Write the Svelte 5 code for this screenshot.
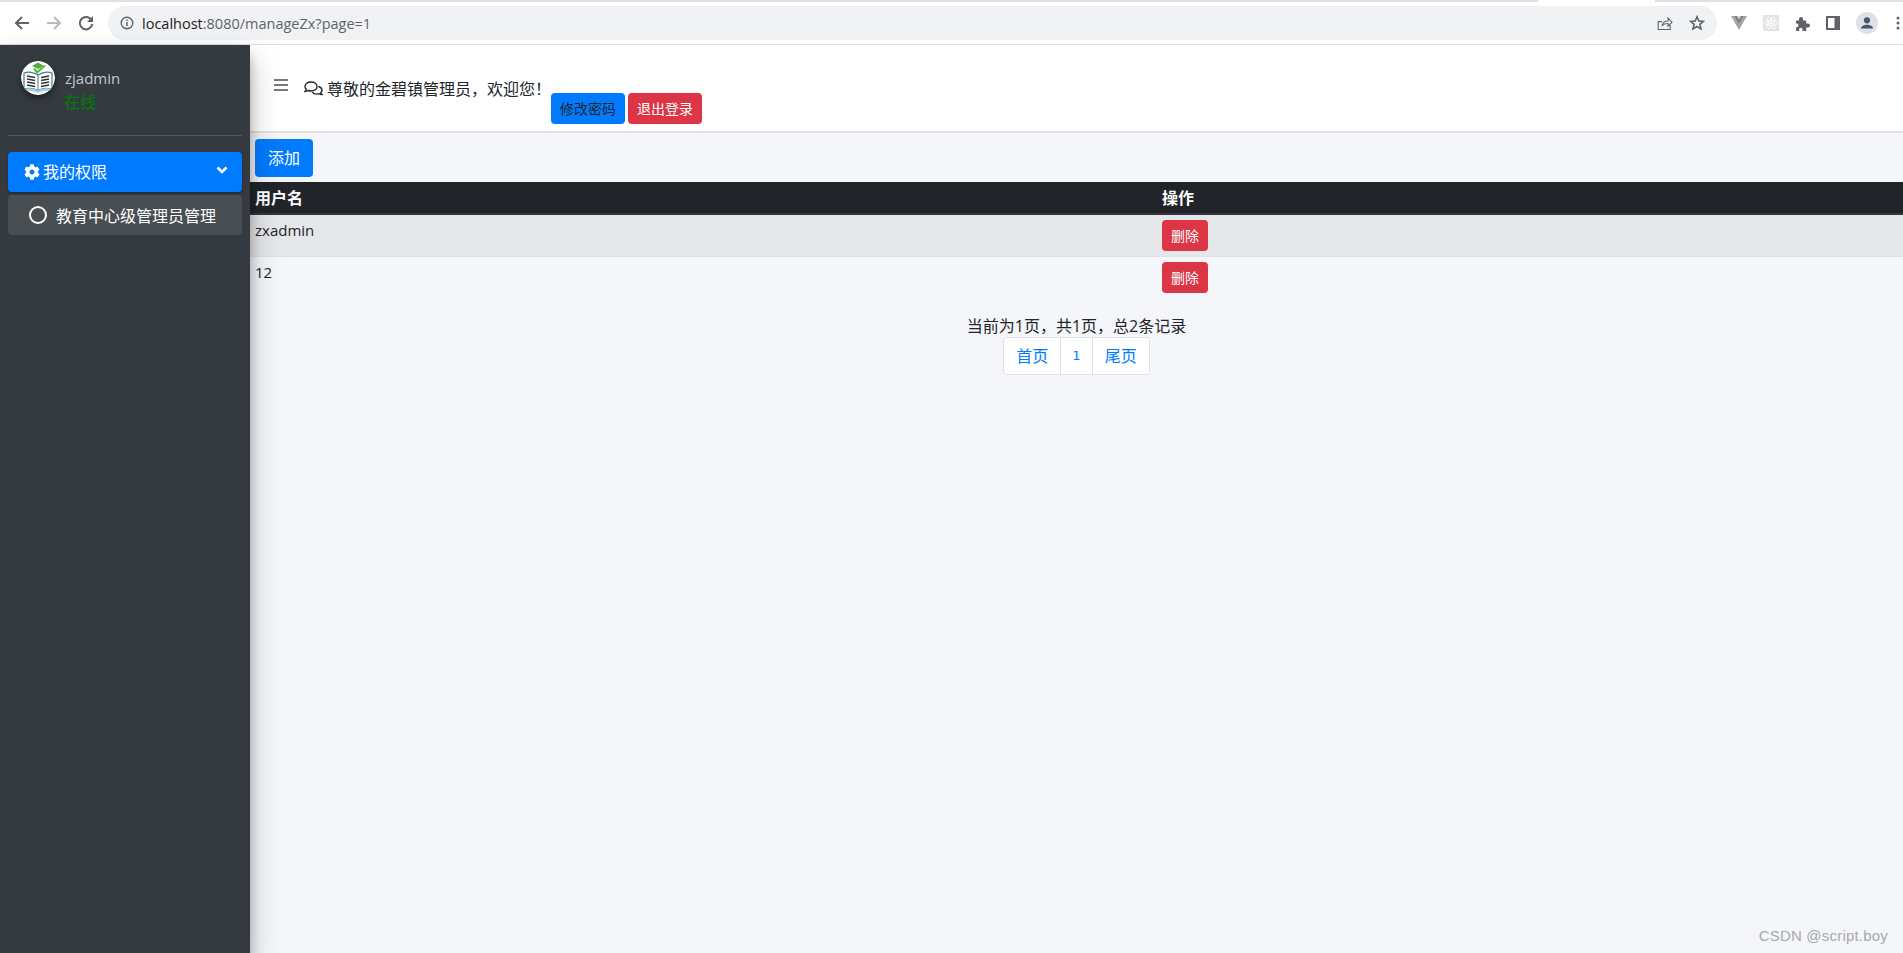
<script>
  const users = [
    { name: 'zxadmin' },
    { name: '12' }
  ];
</script>

<div class="page">
  <header class="chrome">
    <div class="tabstrip"><span class="strip s1"></span><span class="strip s2"></span></div>
    <div class="toolbar">
      <div class="navbtns">
        <svg width="16" height="16" viewBox="0 0 16 16"><path d="M15 8H2.5M8 2 2 8l6 6" fill="none" stroke="#5f6368" stroke-width="2"/></svg>
        <svg width="16" height="16" viewBox="0 0 16 16"><path d="M1 8h12.5M8 2l6 6-6 6" fill="none" stroke="#b8babd" stroke-width="2"/></svg>
        <svg width="16" height="16" viewBox="0 0 16 16"><path d="M13.6 5.4A6.2 6.2 0 1 0 14.2 9" fill="none" stroke="#5f6368" stroke-width="2"/><path d="M15 1v6H9z" fill="#5f6368"/></svg>
      </div>
      <div class="omnibox">
        <svg class="info" width="14" height="14" viewBox="0 0 14 14"><circle cx="7" cy="7" r="5.8" fill="none" stroke="#5f6368" stroke-width="1.4"/><path d="M6.3 6h1.4v4.3H6.3zM6.3 3.6h1.4V5H6.3z" fill="#5f6368"/></svg>
        <span class="url"><span class="host">localhost</span>:8080/manageZx?page=1</span>
        <span class="spacer"></span>
        <svg width="16" height="16" viewBox="0 0 16 16"><path d="M5 14.500H1.200V6.600H5M1.200 14.500h12V10M5 11c.6-3.200 3-5 6-5V3l4 4.200-4 4V8.600c-2.500-.2-4.600.6-6 2.400z" fill="none" stroke="#5f6368" stroke-width="1.100"/></svg>
        <svg class="star" width="16" height="16" viewBox="0 0 16 16"><path d="m8 1.800 1.800 4.200 4.600.4-3.500 3 1.100 4.500L8 11.500l-4 2.400 1.100-4.500-3.500-3 4.600-.4z" fill="none" stroke="#5f6368" stroke-width="1.600"/></svg>
      </div>
      <div class="exts">
        <svg width="16" height="14" viewBox="0 0 16 14"><path d="M0 0h16L8 14z" fill="#a5a5a5"/><path d="M3.500 0h9L8 7.800z" fill="#7d7d7d"/><path d="M5.800 0h4.400L8 3.800z" fill="#d5d5d5"/></svg>
        <svg width="16" height="16" viewBox="0 0 16 16"><rect width="16" height="16" fill="#e3e3e3"/><g fill="none" stroke="#fff" stroke-width=".8"><ellipse cx="8" cy="8" rx="6.500" ry="2.500"/><ellipse cx="8" cy="8" rx="6.500" ry="2.500" transform="rotate(60 8 8)"/><ellipse cx="8" cy="8" rx="6.500" ry="2.500" transform="rotate(120 8 8)"/></g><circle cx="8" cy="8" r="1.300" fill="#fff"/></svg>
        <svg width="15" height="15" viewBox="0 0 15 15"><path d="M1 4.500h3V3a2 2 0 0 1 4 0v1.500h3.200v3H13a2 2 0 0 1 0 4h-1.800V15H7.500v-1.500a1.700 1.700 0 0 0-3.400 0V15H1v-3.800h1a1.900 1.900 0 0 0 0-3.700H1z" fill="#5f6368"/></svg>
        <svg width="14" height="14" viewBox="0 0 14 14"><path d="M0 0h14v14H0zM2 2v10h6.500V2z" fill="#5f6368" fill-rule="evenodd"/></svg>
        <svg width="22" height="22" viewBox="0 0 22 22"><circle cx="11" cy="11" r="11" fill="#dee1e6"/><circle cx="11" cy="8.300" r="3.100" fill="#4a5670"/><path d="M5 16.500c0-2.600 3.300-3.700 6-3.700s6 1.100 6 3.700z" fill="#4a5670"/></svg>
        <svg class="dots" width="4" height="14" viewBox="0 0 4 14"><circle cx="2" cy="2" r="1.500" fill="#5f6368"/><circle cx="2" cy="7" r="1.500" fill="#5f6368"/><circle cx="2" cy="12" r="1.500" fill="#5f6368"/></svg>
      </div>
    </div>
  </header>

  <div class="app">
    <aside class="sidebar">
      <div class="user-panel">
        <svg class="logo" width="34" height="34" viewBox="0 0 34 34">
          <circle cx="17" cy="17" r="17" fill="#fff"/>
          <path d="M3 12c4-1.500 10-1 14 2 4-3 10-3.500 14-2v16c-5-1.300-10-.8-14 1.500-4-2.300-9-2.800-14-1.500z" fill="#fff" stroke="#3f7f9e" stroke-width="1.200"/>
          <path d="M3 28c5-1.300 10-.8 14 1.500 4-2.300 9-2.800 14-1.500v2.500c-5-1-10-.5-14 1.500-4-2-9-2.500-14-1.500z" fill="#a9cfe2"/>
          <path d="M17 14v15" stroke="#3f7f9e"/>
          <path d="M6 15l8 1.500M6 18l8 1.500M6 21l8 1.500M6 24l8 1.500M28 15l-8 1.500M28 18l-8 1.500M28 21l-8 1.500M28 24l-8 1.500" stroke="#333" stroke-width="1.300"/>
          <path d="M11 5l6-3.500L23 5l-6 3z" fill="#5aa845"/>
          <path d="M12 8l4 5 9-8-1.500-1-7 5.500L14 7z" fill="#6bb544"/>
        </svg>
        <div class="user-info">
          <span class="username">zjadmin</span>
          <span class="online">在线</span>
        </div>
      </div>
      <nav class="menu">
        <div class="menu-head">
          <svg class="gear" width="16" height="16" viewBox="0 0 512 512"><path fill="#fff" d="M487.400 315.700l-42.600-24.600c4.300-23.200 4.300-47 0-70.200l42.600-24.600c4.900-2.800 7.100-8.600 5.500-14-11.100-35.600-30-67.800-54.700-94.600-3.800-4.100-10-5.100-14.800-2.300L380.800 110c-17.900-15.400-38.500-27.300-60.800-35.100V25.800c0-5.600-3.900-10.500-9.400-11.700-36.700-8.200-74.300-7.800-109.200 0-5.500 1.200-9.400 6.100-9.400 11.700V75c-22.200 7.900-42.800 19.800-60.800 35.100L88.700 85.500c-4.900-2.800-11-1.900-14.800 2.300-24.700 26.700-43.600 58.900-54.700 94.600-1.700 5.400.6 11.200 5.500 14L67.300 221c-4.300 23.200-4.300 47 0 70.200l-42.600 24.600c-4.900 2.800-7.100 8.600-5.500 14 11.100 35.600 30 67.800 54.700 94.600 3.800 4.100 10 5.100 14.800 2.300l42.600-24.600c17.900 15.400 38.500 27.300 60.800 35.100v49.200c0 5.600 3.900 10.500 9.400 11.700 36.700 8.200 74.300 7.800 109.200 0 5.500-1.200 9.400-6.100 9.400-11.700v-49.200c22.200-7.900 42.800-19.800 60.800-35.100l42.600 24.600c4.900 2.800 11 1.900 14.800-2.300 24.700-26.700 43.600-58.900 54.700-94.600 1.500-5.500-.7-11.300-5.600-14.100zM256 336c-44.100 0-80-35.900-80-80s35.900-80 80-80 80 35.900 80 80-35.900 80-80 80z"/></svg>
          <span>我的权限</span>
          <svg class="chev" width="12" height="10" viewBox="0 0 12 10"><path d="M1.500 2.500 6 7l4.500-4.500" fill="none" stroke="#fff" stroke-width="2.600"/></svg>
        </div>
        <div class="menu-item">
          <span class="circle"></span>
          <span>教育中心级管理员管理</span>
        </div>
      </nav>
    </aside>

    <main class="main">
      <div class="navbar">
        <svg class="bars" width="14" height="12" viewBox="0 0 14 12"><path d="M0 1h14M0 6h14M0 11h14" stroke="#7a7a7a" stroke-width="1.800"/></svg>
        <svg class="comments" width="19" height="15" viewBox="0 0 19 15"><path d="M7 1C3.500 1 1 3 1 5.500c0 1.100.5 2.100 1.300 2.900-.2.800-.7 1.500-1.300 2.100 1.200 0 2.300-.4 3.200-1 .9.300 1.800.5 2.800.5 3.500 0 6-2 6-4.500S10.500 1 7 1z" fill="none" stroke="#212529" stroke-width="1.400"/><path d="M14.500 5.500c2 .6 3.500 2 3.500 3.800 0 1-.5 1.800-1.200 2.500.2.700.6 1.300 1.200 1.800-1.100 0-2-.3-2.800-.9-.8.300-1.600.4-2.500.4-2 0-3.600-.7-4.500-2" fill="none" stroke="#212529" stroke-width="1.400"/></svg>
        <span class="welcome">尊敬的金碧镇管理员，欢迎您！</span>
        <div class="nav-actions">
          <button class="btn primary dark-text">修改密码</button>
          <button class="btn danger">退出登录</button>
        </div>
      </div>

      <div class="content">
        <button class="btn primary add">添加</button>
        <table>
          <thead>
            <tr><th class="col-name">用户名</th><th>操作</th></tr>
          </thead>
          <tbody>
            {#each users as user, i}
              <tr class:odd={i % 2 == 0}>
                <td>{user.name}</td>
                <td><button class="btn danger">删除</button></td>
              </tr>
            {/each}
          </tbody>
        </table>

        <div class="pager">
          <div class="summary">当前为1页，共1页，总2条记录</div>
          <ul class="pagination">
            <li>首页</li>
            <li class="num">1</li>
            <li>尾页</li>
          </ul>
        </div>
      </div>
    </main>
  </div>

  <div class="watermark">CSDN @script.boy</div>
</div>

<style>
:global(body) {
  margin: 0;
  background: #f4f6f9;
  overflow: hidden;
}

.page {
  height: 953px;
  display: flex;
  flex-direction: column;
  position: relative;
  font-family: "Open Sans", "Noto Sans CJK SC", sans-serif;
  font-size: 16px;
  color: #212529;
  overflow: hidden;
}

.chrome {
  height: 45px;
  flex: none;
  background: #fff;
  border-bottom: 1px solid #dcdee1;
  box-sizing: border-box;
}

.tabstrip {
  height: 2px;
  display: flex;
  justify-content: space-between;
}

.strip {
  background: #dee1e6;
  height: 2px;
}

.s1 { width: 1538px; }
.s2 { width: 248px; }

.toolbar {
  height: 34px;
  margin-top: 4px;
  display: flex;
  align-items: center;
}

.navbtns {
  width: 108px;
  display: flex;
  gap: 16px;
  padding-left: 14px;
  box-sizing: border-box;
  flex: none;
}

.omnibox {
  width: 1609px;
  height: 34px;
  background: #f0f2f4;
  border-radius: 17px;
  display: flex;
  align-items: center;
  box-sizing: border-box;
  padding: 0 12px;
  flex: none;
}

.info { margin-right: 8px; }

.url {
  font-size: 14.5px;
  color: #5f6368;
}

.host { color: #202124; }

.spacer { flex: 1; }

.star { margin-left: 16px; }

.exts {
  display: flex;
  align-items: center;
  gap: 16px;
  padding-left: 14px;
}

.dots { margin-left: 2px; }

.app {
  flex: 1;
  display: flex;
  min-height: 0;
}

.sidebar {
  width: 250px;
  flex: none;
  background: #343a40;
  box-shadow: 0 14px 28px rgba(0, 0, 0, .25), 0 10px 10px rgba(0, 0, 0, .22);
  position: relative;
  z-index: 2;
  padding: 0 8px;
  box-sizing: border-box;
}

.user-panel {
  height: 91px;
  border-bottom: 1px solid #4f5962;
  box-sizing: border-box;
  display: flex;
  padding: 16px 0 0 13px;
  gap: 10px;
}

.logo {
  border-radius: 50%;
  box-shadow: 0 3px 6px rgba(0, 0, 0, .5);
  flex: none;
}

.user-info {
  display: flex;
  flex-direction: column;
  line-height: 24px;
  padding-top: 5px;
}

.username { color: #c2c7d0; font-size: 15px; }
.online { color: green; margin-left: -1px; }

.menu { padding-top: 16px; }

.menu-head {
  height: 40px;
  background: #007bff;
  border-radius: 4px;
  color: #fff;
  display: flex;
  align-items: center;
  padding: 0 14px 0 16px;
  gap: 3px;
  line-height: 38px;
  box-shadow: 0 1px 3px rgba(0, 0, 0, .12), 0 1px 2px rgba(0, 0, 0, .24);
}

.chev { margin-left: auto; margin-top: -4px; }

.menu-item {
  height: 40px;
  margin-top: 3px;
  background: #494e53;
  border-radius: 4px;
  color: #fff;
  display: flex;
  align-items: center;
  padding-left: 21px;
  gap: 9px;
}

.circle {
  width: 14px;
  height: 14px;
  border: 2px solid #fff;
  border-radius: 50%;
}

.main {
  flex: 1;
  min-width: 0;
  display: flex;
  flex-direction: column;
}

.navbar {
  height: 88px;
  flex: none;
  background: #fff;
  border-bottom: 2px solid #dee0e3;
  box-sizing: border-box;
  display: flex;
  align-items: flex-start;
}

.bars { margin: 34px 0 0 24px; }
.comments { margin: 36px 0 0 16px; }

.welcome {
  margin: 32px 0 0 4px;
  line-height: 24px;
  width: 216px;
  white-space: nowrap;
}

.nav-actions {
  display: flex;
  gap: 3px;
  margin: 48px 0 0 8px;
}

.btn {
  font-family: inherit;
  border: 1px solid transparent;
  border-radius: 4px;
  font-size: 14px;
  height: 31px;
  padding: 0 8px;
  line-height: 1;
  color: #fff;
}

.primary { background: #007bff; }
.danger { background: #dc3545; }
.dark-text { color: #212529; }

.content {
  flex: 1;
  padding-top: 6px;
}

.add {
  display: block;
  font-size: 16px;
  height: 38px;
  padding: 0 12px;
  margin-left: 5px;
}

table {
  width: 100%;
  border-collapse: collapse;
  margin-top: 5px;
  table-layout: fixed;
}

th {
  background: #212529;
  color: #fff;
  text-align: left;
  height: 32px;
  padding: 0 5px 2px;
  font-weight: 700;
  border-bottom: 2px solid #32383e;
  box-sizing: border-box;
}

.col-name { width: 907px; }

td {
  padding: 5px;
  vertical-align: top;
  border-bottom: 1px solid #dee2e6;
  font-size: 15px;
  line-height: 20px;
  height: 42px;
  box-sizing: border-box;
}

tbody tr:last-child td { border-bottom: 0; }

tr.odd td { background: #e6e7ea; }

.pager {
  margin-top: 15px;
  display: flex;
  flex-direction: column;
  align-items: center;
}

.summary { line-height: 24px; }

.pagination {
  display: flex;
  list-style: none;
  padding: 0;
  background: #fff;
  border: 1px solid #dee2e6;
  border-radius: 4px;
  color: #007bff;
  margin: -1px 0 0;
}

.pagination li {
  height: 36px;
  line-height: 36px;
  padding: 0 12px;
  border-left: 1px solid #dee2e6;
}

.pagination li:first-child { border-left: 0; }

.pagination .num {
  font-family: "DejaVu Sans", sans-serif;
  font-size: 13px;
  padding: 0 11px;
}

.watermark {
  position: absolute;
  right: 15px;
  bottom: 9px;
  font-family: "Liberation Sans", sans-serif;
  font-size: 15px;
  letter-spacing: .2px;
  color: #a8a9ac;
}
</style>
